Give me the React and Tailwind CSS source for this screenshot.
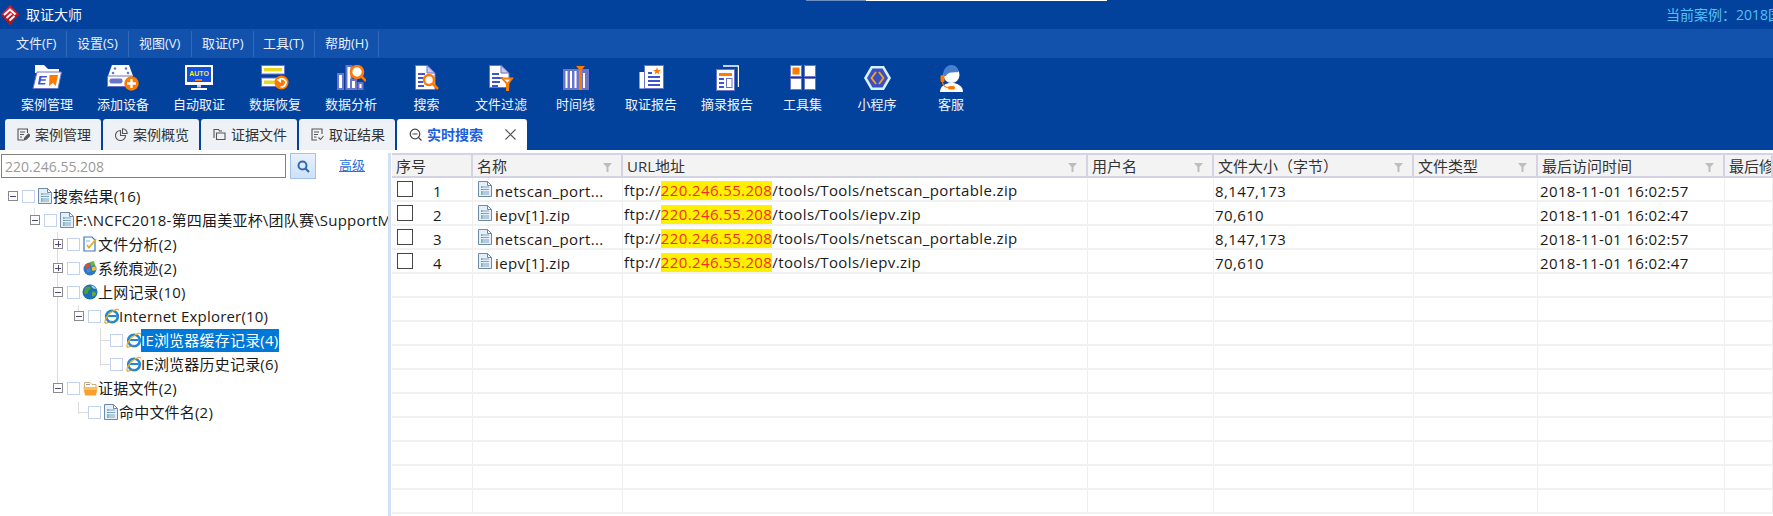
import React from 'react';

const L = '#6a74c8', B = '#3f55d0', O = '#ff7a00';

const Folder = () => (
  <svg width="30" height="24" viewBox="0 0 30 24">
    <path d="M3 0H12L16 4H27V8H3Z" fill="#fff" />
    <path d="M5 7H29.5L26 23.5H1Z" fill="#fff" stroke={L} />
    <path d="M7.5 11H15L14.6 12.5H9.5L9.1 14.2H14L13.6 15.7H8.8L8.3 18H13.5L13.1 19.6H5.9Z" fill={B} />
    <path d="M17.5 10H26L23.7 21L21 18L17 21Z" fill={O} />
  </svg>
);
const AddDev = () => (
  <svg width="32" height="26" viewBox="0 0 32 26">
    <path d="M5 0H22L26 11H1Z" fill="#fff" />
    <path d="M0.5 11H25.5V21.5H0.5Z" fill="#fff" stroke={L} />
    <rect x="2.5" y="13.5" width="13" height="5" rx="2" fill={L} />
    <g fill={L}>
      <circle cx="8" cy="3.5" r="1.3" /><circle cx="19" cy="3.5" r="1.3" />
      <circle cx="6" cy="8" r="1.3" /><circle cx="21" cy="8" r="1.3" />
    </g>
    <circle cx="24.5" cy="18.5" r="7.2" fill={O} />
    <path d="M24.5 14V23M20 18.5H29" stroke="#fff" strokeWidth="2.4" />
  </svg>
);
const Auto = () => (
  <svg width="28" height="25" viewBox="0 0 28 25">
    <rect x="0" y="0" width="28" height="20" fill="#fff" />
    <rect x="2" y="2" width="24" height="15" fill="#1450d8" />
    <text x="14" y="10.6" textAnchor="middle" fill="#ffe81a" fontSize="7" fontWeight="700" fontFamily="'Liberation Sans',sans-serif">AUTO</text>
    <rect x="10" y="14" width="7" height="2" fill={O} />
    <rect x="12" y="20" width="4" height="2.5" fill="#c7cdf0" />
    <rect x="6" y="23" width="16" height="2" fill="#fff" />
  </svg>
);
const Recover = () => (
  <svg width="28" height="25" viewBox="0 0 28 25">
    <rect x="0.5" y="0.5" width="23" height="8.5" fill="#fff" stroke={L} />
    <rect x="3" y="3" width="18" height="3.4" fill="#e8d81e" />
    <rect x="0.5" y="13" width="23" height="8.5" fill="#fff" stroke={L} />
    <rect x="3" y="15.5" width="11" height="3.4" fill="#e8d81e" />
    <circle cx="20.5" cy="17.5" r="7" fill={O} />
    <path d="M17.5 15.5A4 4 0 1 1 19.5 21.5" fill="none" stroke="#fff" strokeWidth="1.8" />
    <path d="M15.5 14.5L20 14V18Z" fill="#fff" />
  </svg>
);
const Analysis = () => (
  <svg width="30" height="25" viewBox="0 0 30 25">
    <rect x="1" y="8" width="7" height="17" fill={L} /><rect x="3" y="10" width="3" height="13" fill="#fff" />
    <rect x="9.5" y="0" width="7" height="25" fill={L} /><rect x="11.5" y="2" width="3" height="21" fill="#fff" />
    <rect x="14" y="14" width="7" height="11" fill={L} /><rect x="16" y="16" width="3" height="7" fill="#fff" />
    <rect x="21.5" y="17" width="6" height="8" fill={L} /><rect x="23.5" y="19" width="2" height="4" fill="#fff" />
    <circle cx="21" cy="7" r="6" fill="#fff" stroke={O} strokeWidth="2.6" />
    <path d="M25.5 11.5L30 16" stroke={O} strokeWidth="2.6" />
  </svg>
);
const DocSearch = () => (
  <svg width="24" height="25" viewBox="0 0 24 25">
    <path d="M0.5 0.5H12L20 8V24.5H0.5Z" fill="#fff" stroke={L} />
    <path d="M12 0.5V8H20Z" fill="#c8ccf0" stroke={L} />
    <rect x="3" y="8" width="7" height="2" fill={B} /><rect x="3" y="12" width="6" height="2" fill={B} />
    <rect x="3" y="16" width="5" height="2" fill={B} /><rect x="3" y="20" width="6" height="2" fill={B} />
    <circle cx="14" cy="15" r="5" fill="#fff" stroke={O} strokeWidth="2.4" />
    <path d="M18 19L23 24" stroke={O} strokeWidth="2.6" />
  </svg>
);
const DocFilter = () => (
  <svg width="25" height="26" viewBox="0 0 25 26">
    <path d="M0.5 0.5H12L20 8V22.5H0.5Z" fill="#fff" stroke={L} />
    <path d="M12 0.5V8H20Z" fill="#c8ccf0" stroke={L} />
    <rect x="3" y="8" width="7" height="2" fill={B} /><rect x="3" y="12" width="11" height="2" fill={B} />
    <rect x="3" y="16" width="8" height="2" fill={B} /><rect x="3" y="20" width="6" height="2" fill={B} />
    <path d="M11 12.5H25L20 19V26H17V19Z" fill={O} />
    <path d="M15 14.5H21L18.5 17.5Z" fill="#fff" />
  </svg>
);
const Timeline = () => (
  <svg width="26" height="25" viewBox="0 0 26 25">
    <rect x="0" y="4" width="26" height="21" fill={L} />
    <rect x="2.5" y="6" width="2" height="17" fill="#fff" /><rect x="7" y="6" width="2" height="17" fill="#fff" />
    <rect x="11.5" y="6" width="2" height="17" fill="#fff" /><rect x="20" y="8" width="2" height="15" fill="#fff" />
    <rect x="16" y="5" width="3" height="20" fill={O} />
    <path d="M13 1H22L17.5 6Z" fill={O} />
  </svg>
);
const Report = () => (
  <svg width="25" height="24" viewBox="0 0 25 24">
    <path d="M5 7H0.5V23.5H8Z" fill="#fff" />
    <rect x="5.5" y="0.5" width="19" height="23" fill="#fff" stroke={L} />
    <rect x="9" y="7" width="4" height="2" fill={B} />
    <path d="M18 2L19 5H22L19.6 6.8L20.5 9.5L18 7.8L15.5 9.5L16.4 6.8L14 5H17Z" fill={O} />
    <rect x="9" y="11" width="12" height="2" fill={B} /><rect x="9" y="15" width="12" height="2" fill={B} /><rect x="9" y="19" width="12" height="2" fill={B} />
  </svg>
);
const Excerpt = () => (
  <svg width="23" height="26" viewBox="0 0 23 26">
    <path d="M7 1H22.5V22" fill="none" stroke="#fff" strokeWidth="1.4" />
    <rect x="0.5" y="4.5" width="18" height="21" fill="#fff" stroke={L} />
    <rect x="3" y="8" width="13" height="3" fill={O} />
    <rect x="3" y="13" width="5" height="2" fill={B} /><rect x="3" y="17" width="5" height="2" fill={B} /><rect x="3" y="21" width="5" height="2" fill={B} />
    <rect x="10.5" y="13.5" width="5.5" height="9" fill="#fff" stroke={L} />
  </svg>
);
const Tools = () => (
  <svg width="26" height="25" viewBox="0 0 26 25">
    <rect x="0.5" y="0.5" width="11" height="11" fill="#fff" stroke={L} /><rect x="2.5" y="2.5" width="7" height="7" fill={O} />
    <rect x="14.5" y="0.5" width="11" height="11" fill="#fff" stroke={L} />
    <rect x="0.5" y="13.5" width="11" height="11" fill="#fff" stroke={L} />
    <rect x="14.5" y="13.5" width="11" height="11" fill="#fff" stroke={L} />
  </svg>
);
const Mini = () => (
  <svg width="27" height="26" viewBox="0 0 27 26">
    <path d="M7 1H20L27 13L20 25H7L0 13Z" fill="#d6f2fb" />
    <path d="M8.5 3.5H18.5L24 13L18.5 22.5H8.5L3 13Z" fill="#3a4fc0" />
    <path d="M12 7L7.5 13L12 19M15 7L19.5 13L15 19" fill="none" stroke="#f7a51c" strokeWidth="1.8" />
  </svg>
);
const Agent = () => (
  <svg width="25" height="27" viewBox="0 0 25 27">
    <path d="M1 27C1 21 6 19 10 18H15C19 19 24 21 24 27Z" fill="#fff" />
    <circle cx="12.5" cy="10" r="8" fill="#fff" />
    <path d="M4.5 11C3.5 4 8 0 12.5 0C17 0 19.5 3 19.5 7C15 8 9 6 7 11Z" fill="#4a7fd0" />
    <rect x="1.5" y="10" width="4" height="7" rx="1.5" fill={O} />
    <path d="M3.5 17C4 21 7 22.500 10 22.500" fill="none" stroke={O} strokeWidth="1.2" />
    <rect x="9" y="21" width="7" height="3.500" rx="1.500" fill={O} />
  </svg>
);

const tools = [
  ['案例管理', Folder, 'w-[76px]'], ['添加设备', AddDev, 'w-[76px]'], ['自动取证', Auto, 'w-[76px]'], ['数据恢复', Recover, 'w-[76px]'],
  ['数据分析', Analysis, 'w-[76px]'], ['搜索', DocSearch, 'w-[75px]'], ['文件过滤', DocFilter, 'w-[74px]'], ['时间线', Timeline, 'w-[75px]'],
  ['取证报告', Report, 'w-[76px]'], ['摘录报告', Excerpt, 'w-[76px]'], ['工具集', Tools, 'w-[75px]'], ['小程序', Mini, 'w-[74px]'], ['客服', Agent, 'w-[74px]'],
];

const menus = [['文件(F)', 'w-[67px] pl-[16px]'], ['设置(S)', 'w-[62px] pl-[10px]'], ['视图(V)', 'w-[63px] pl-[10px]'], ['取证(P)', 'w-[62px] pl-[10px]'], ['工具(T)', 'w-[61px] pl-[9px]'], ['帮助(H)', 'w-[64px] pl-[10px]']];

const Logo = () => (
  <svg width="18" height="20" viewBox="0 0 18 20">
    <path d="M9 0L18 9.500L9 20L0 9.500Z" fill="#d81f2a" />
    <path d="M9 11L18 9.500L9 20L0 9.500Z" fill="#a81a22" />
    <path d="M3 10L9 4.500L14.500 9.500M5.500 13L10.500 8.500M8.500 15.500L13.500 11" fill="none" stroke="#fff" strokeWidth="1.900" />
  </svg>
);

const TabIcon = ({ k }) => {
  const c = { fill: 'none', stroke: '#555', strokeWidth: 1.1 };
  return (
    <svg width="13" height="13" viewBox="0 0 13 13" className="shrink-0">
      {k === 0 && <g {...c}><path d="M10.5 5V1H1V12H6" /><path d="M3 4H8M3 6.500H7M3 9H5" /><path d="M7 12L8 9.500L11.500 6L13 7.500L9.500 11Z" fill="#555" /></g>}
      {k === 1 && <g {...c}><path d="M5.500 2.500A5 5 0 1 0 10.500 7.500H5.500Z" /><path d="M7.500 0.800A5 5 0 0 1 12.200 5.500H7.500Z" /></g>}
      {k === 2 && <g {...c}><path d="M1 10V1.500H5.500L6.500 3H9" /><path d="M3.500 5H12V11.500H3.500Z" /></g>}
      {k === 3 && <g {...c}><path d="M11 6V1H1V12H6" /><path d="M3 4H8M3 6.500H7M3 9H5.500" /><path d="M7.500 9.500L9.500 11.500L12.500 8" /></g>}
      {k === 4 && <g fill="none" stroke="#444" strokeWidth="1.200"><circle cx="6" cy="6" r="4.800" /><path d="M3.500 6H8.500M9.500 9.500L12.500 12.500" /></g>}
    </svg>
  );
};

const tabs = ['案例管理', '案例概览', '证据文件', '取证结果'];

const FileIcon = () => (
  <svg width="14" height="16" viewBox="0 0 14 16" className="shrink-0">
    <path d="M0.500 0.500H9.500L13.500 4.500V15.500H0.500Z" fill="#e6eff7" stroke="#6f8aa6" />
    <path d="M9.500 0.500V4.500H13.500Z" fill="#fff" stroke="#6f8aa6" />
    <path d="M3 6H11M3 8.500H11M3 11H11M3 13H11" stroke="#7fa6c4" strokeWidth="1" />
    <path d="M3 6H4.500M3 8.500H4.500M3 11H4.500M3 13H4.500" stroke="#4aa070" strokeWidth="1" />
  </svg>
);
const AnalysisTree = () => (
  <svg width="14" height="16" viewBox="0 0 14 16" className="shrink-0">
    <path d="M1 1H9L12 4V15H1Z" fill="#fff" stroke="#3b78c4" strokeWidth="1.200" />
    <path d="M4 9L6 11.500L13 3" fill="none" stroke="#e0b020" strokeWidth="1.800" />
    <path d="M3 5H7" stroke="#8ab0d8" />
  </svg>
);
const WinIcon = () => (
  <svg width="14" height="16" viewBox="0 0 14 16" className="shrink-0">
    <circle cx="7" cy="9" r="6.500" fill="#2b78c2" />
    <path d="M2 5L6 3L7 7L3 9Z" fill="#e8482c" /><path d="M7 2L11 1L12 5L8 6.500Z" fill="#67b83c" />
    <path d="M3.500 9.500L7 8L8 11.500L4.500 12.500Z" fill="#3b8ede" /><path d="M8.500 7.500L12.500 6L13 10L9.500 11Z" fill="#f5c422" />
  </svg>
);
const GlobeIcon = () => (
  <svg width="16" height="16" viewBox="0 0 16 16" className="shrink-0">
    <circle cx="8" cy="8" r="7.500" fill="#1d6fb8" />
    <path d="M3 4C5 2 8 2 9 4C8 6 6 6 6 8C6 10 4 11 2 9Z" fill="#4da03a" />
    <path d="M10 8C12 7 14 8 14 10C13 12 11 13 10 12Z" fill="#5cae44" />
    <path d="M9 1.500C11 1.500 13 3 14 5C12 5 10 4 9 1.500Z" fill="#a8d8f0" />
  </svg>
);
const IEIcon = () => (
  <svg width="15" height="16" viewBox="0 0 15 16" className="shrink-0">
    <circle cx="8" cy="8.500" r="5.800" fill="none" stroke="#1f86d8" strokeWidth="2.600" />
    <path d="M3.500 8H12.500" stroke="#1f86d8" strokeWidth="2" />
    <path d="M1 15C0 12 5 5 9 3C12 1.500 14.500 0.500 14.500 2.500" fill="none" stroke="#eeb01c" strokeWidth="1.300" />
    <path d="M1 15C3 15.500 6 14 8 13" fill="none" stroke="#c9861c" strokeWidth="1" />
  </svg>
);
const OpenFolder = () => (
  <svg width="15" height="15" viewBox="0 0 15 15" className="shrink-0">
    <path d="M1.500 7V1.500H7L9 3.500H13V7Z" fill="#fff" stroke="#c09860" strokeWidth="0.800" />
    <path d="M3 3.500H7" stroke="#999" />
    <path d="M0.500 6.500H14.500L13 14.500H2Z" fill="#f9a02c" />
    <path d="M0.500 6.500H14.500L14 9H1Z" fill="#fcc064" />
  </svg>
);

const Exp = ({ open }) => (
  <span className="relative z-10 flex h-[8px] w-[8px] shrink-0 items-center justify-center border border-[#8a8a8a] bg-white box-content">
    <span className="block h-px w-[6px] bg-[#4a4a7a]" />
    {!open && <span className="absolute block h-[6px] w-px bg-[#4a4a7a]" />}
  </span>
);
const Cb = () => <span className="relative z-10 block h-[11px] w-[11px] shrink-0 border border-[#c3d2f2] bg-white box-content" />;

const tree = [
  { lv: 0, exp: true, I: FileIcon, t: '搜索结果(16)' },
  { lv: 1, exp: true, I: FileIcon, t: 'F:\\NCFC2018-第四届美亚杯\\团队赛\\SupportM' },
  { lv: 2, exp: false, I: AnalysisTree, t: '文件分析(2)' },
  { lv: 2, exp: false, I: WinIcon, t: '系统痕迹(2)' },
  { lv: 2, exp: true, I: GlobeIcon, t: '上网记录(10)' },
  { lv: 3, exp: true, I: IEIcon, t: 'Internet Explorer(10)' },
  { lv: 4, exp: null, I: IEIcon, t: 'IE浏览器缓存记录(4)', sel: true },
  { lv: 4, exp: null, I: IEIcon, t: 'IE浏览器历史记录(6)' },
  { lv: 2, exp: true, I: OpenFolder, t: '证据文件(2)' },
  { lv: 3, exp: null, I: FileIcon, t: '命中文件名(2)' },
];
const pads = ['pl-[8px]', 'pl-[30px]', 'pl-[53px]', 'pl-[74px]', 'pl-[110px]'];

const Tree = () => (
  <div className="relative mt-[5px] flex flex-col">
    <span className="absolute left-[57px] top-[48px] h-[158px] w-px bg-[#dcdcdc]" />
    <span className="absolute left-[34px] top-[24px] h-[13px] w-px bg-[#e4e4e4]" />
    <span className="absolute left-[78px] top-[121px] h-[13px] w-px bg-[#dcdcdc]" />
    <span className="absolute left-[100px] top-[144px] h-[38px] w-px bg-[#dcdcdc]" />
    <span className="absolute left-[78px] top-[218px] h-[12px] w-px bg-[#dcdcdc]" />
    {tree.map((r, i) => (
      <div key={i} className={`relative flex h-[24px] items-center ${r.lv === 3 && r.exp === null ? 'pl-[88px]' : pads[r.lv]}`}>
        {r.lv === 4 && <span className="absolute left-[100px] top-[12px] h-px w-[10px] bg-[#dcdcdc]" />}
        {r.lv === 3 && r.exp === null && <span className="absolute left-[78px] top-[12px] h-px w-[10px] bg-[#dcdcdc]" />}
        {r.exp !== null && <span className="mr-[4px]"><Exp open={r.exp} /></span>}
        <Cb />
        <span className="ml-[3px] mr-[1px] flex w-[14px] shrink-0 justify-center"><r.I /></span>
        <span className={`flex h-[23px] items-center whitespace-nowrap text-[15px] tracking-[0.2px] ${r.sel ? 'bg-[#0078d7] pr-[1px] text-white' : 'text-[#1a1a1a]'}`}>{r.t}</span>
      </div>
    ))}
  </div>
);

const cols = ['w-[81px]', 'w-[150px]', 'w-[465px]', 'w-[126px]', 'w-[200px]', 'w-[124px]', 'w-[187px]', 'w-[48px]'];
const heads = ['序号', '名称', 'URL地址', '用户名', '文件大小（字节）', '文件类型', '最后访问时间', '最后修'];

const Funnel = () => (
  <svg width="9" height="9" viewBox="0 0 9 9" className="absolute right-[9px] top-[8px]">
    <path d="M0 0H9L5.500 4V9H3.500V4Z" fill="#bdbdbd" />
  </svg>
);

const rows = [
  [1, 'netscan_port...', 'netscan_portable.zip', '8,147,173', '2018-11-01 16:02:57'],
  [2, 'iepv[1].zip', 'iepv.zip', '70,610', '2018-11-01 16:02:47'],
  [3, 'netscan_port...', 'netscan_portable.zip', '8,147,173', '2018-11-01 16:02:57'],
  [4, 'iepv[1].zip', 'iepv.zip', '70,610', '2018-11-01 16:02:47'],
];
const cell = 'h-full shrink-0 overflow-hidden whitespace-nowrap border-r border-[#efefef]';

const Table = () => (
  <div className="min-w-0 flex-1 overflow-hidden">
    <div className="flex h-[25px] w-[1400px] border-y-2 border-t-[#d3d3e3] border-b-[#d3d3e3] bg-[#f3f3f3]">
      {heads.map((h, i) => (
        <div key={h} className={`relative flex shrink-0 items-center overflow-hidden whitespace-nowrap border-r-2 border-[#d3d3e3] pl-[4px] pt-[2px] text-[15px] text-[#333] ${cols[i]}`}>
          {h}
          {i > 0 && i < 7 && <Funnel />}
        </div>
      ))}
    </div>
    {Array.from({ length: 14 }).map((_, i) => {
      const r = rows[i];
      return (
        <div key={i} className="flex h-[24px] w-[1400px] items-stretch border-b-2 border-[#f1f1f1] text-[15px] tracking-[0.38px] text-[#1a1a1a]">
          <div className={`${cell} ${cols[0]} flex items-center pl-[5px]`}>
            {r && <span className="block h-[16px] w-[16px] shrink-0 border border-[#444] bg-white" />}
            {r && <span className="ml-[20px] pt-[4px]">{r[0]}</span>}
          </div>
          <div className={`${cell} ${cols[1]} flex items-center pl-[5px]`}>
            {r && <FileIcon />}
            {r && <span className="ml-[3px] pt-[4px]">{r[1]}</span>}
          </div>
          <div className={`${cell} ${cols[2]} flex items-center pl-[1px] pt-[3px]`}>
            {r && <>ftp://<span className="flex h-[19px] items-center bg-[#fff000] text-[#f0302c]">220.246.55.208</span>/tools/Tools/{r[2]}</>}
          </div>
          <div className={`${cell} ${cols[3]}`} />
          <div className={`${cell} ${cols[4]} flex items-center pl-[1px] pt-[4px]`}>{r && r[3]}</div>
          <div className={`${cell} ${cols[5]}`} />
          <div className={`${cell} ${cols[6]} flex items-center pl-[2px] pt-[4px]`}>{r && r[4]}</div>
          <div className={`${cell} ${cols[7]}`} />
        </div>
      );
    })}
  </div>
);

export default function App() {
  return (
    <div className="relative flex h-[516px] w-[1773px] flex-col overflow-hidden bg-white font-['Open_Sans','Noto_Sans_CJK_SC',sans-serif]">
      <div className="absolute left-[806px] top-0 h-px w-[60px] bg-[#6f8fc4]" />
      <div className="absolute left-[866px] top-0 h-px w-[241px] bg-white" />

      <div className="flex h-[29px] items-center justify-between overflow-hidden bg-[#02429c] pl-[1px] text-[14px]">
        <div className="flex items-center">
          <Logo />
          <span className="ml-[7px] text-[#f2f6ff]">取证大师</span>
        </div>
        <span className="w-[107px] overflow-hidden whitespace-nowrap text-[#4fc3f7]">当前案例：2018国</span>
      </div>

      <div className="flex h-[29px] items-center bg-[#1252ac] text-[13px] text-[#e8f0ff]">
        {menus.map(([m, c]) => (
          <div key={m} className={`flex h-[26px] items-center border-r border-[#3069bb] ${c}`}>{m}</div>
        ))}
      </div>

      <div className="flex h-[61px] bg-[#02429c] pl-[9px]">
        {tools.map(([t, I, w]) => (
          <div key={t} className={`flex shrink-0 flex-col items-center ${w}`}>
            <div className="flex h-[36px] items-start justify-center pt-[7px]"><I /></div>
            <span className="whitespace-nowrap text-[13px] leading-[20px] text-[#eef4ff]">{t}</span>
          </div>
        ))}
      </div>

      <div className="flex h-[31px] items-stretch gap-[2px] bg-[#02429c] pl-[5px] text-[14px]">
        {tabs.map((t, i) => (
          <div key={t} className="flex w-[96px] items-center gap-[5px] rounded-t-[3px] bg-[#eef2f7] pl-[12px] text-[#333]">
            <TabIcon k={i} />
            <span>{t}</span>
          </div>
        ))}
        <div className="flex w-[130px] items-center rounded-t-[3px] bg-white pl-[12px]">
          <TabIcon k={4} />
          <span className="ml-[5px] font-semibold text-[#1a5fe0]">实时搜索</span>
          <svg width="11" height="11" viewBox="0 0 11 11" className="ml-[22px]">
            <path d="M0.500 0.500L10.500 10.500M10.500 0.500L0.500 10.500" stroke="#555" strokeWidth="1.200" />
          </svg>
        </div>
      </div>

      <div className="flex min-h-0 flex-1 pt-[3px]">
        <div className="w-[388px] shrink-0 overflow-hidden">
          <div className="flex h-[26px] items-center pl-[1px]">
            <div className="flex h-[24px] w-[285px] items-center border border-[#808080] pl-[3px] text-[14px] text-[#9a9a9a]">220.246.55.208</div>
            <button className="ml-[4px] flex h-[26px] w-[26px] items-center justify-center border border-[#a3c2ea] bg-gradient-to-b from-[#e8f1fc] to-[#cfe0f6]">
              <svg width="13" height="13" viewBox="0 0 13 13">
                <circle cx="5.500" cy="5.500" r="4" fill="none" stroke="#2f6cb0" strokeWidth="2" />
                <path d="M8.500 8.500L12 12" stroke="#2f6cb0" strokeWidth="2.200" />
              </svg>
            </button>
            <a className="ml-[23px] text-[13px] text-[#2b6fd6] underline">高级</a>
          </div>
          <Tree />
        </div>
        <div className="mr-[1px] w-[3px] shrink-0 bg-[#d3dff2]" />
        <Table />
      </div>
    </div>
  );
}
